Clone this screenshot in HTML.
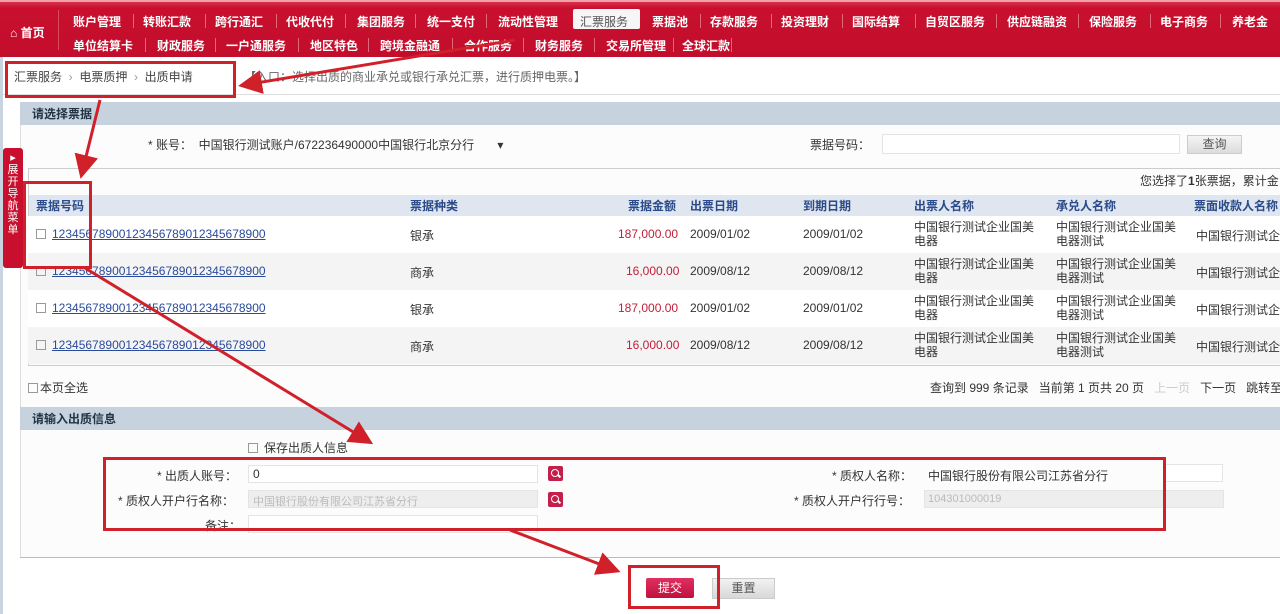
<!DOCTYPE html>
<html><head><meta charset="utf-8"><style>
*{margin:0;padding:0;box-sizing:border-box}
body{width:1280px;height:614px;overflow:hidden;background:#fff;font-family:"Liberation Sans","Noto Sans CJK SC",sans-serif;font-size:12px;color:#333;position:relative}
.abs{position:absolute}
#nav{left:0;top:0;width:1280px;height:57px;background:linear-gradient(#d8324a 0,#c8102e 6px,#c30d2c 100%);border-top:2px solid #f0a0a8}
.nv{position:absolute;color:#fff;font-weight:bold;font-size:12px;white-space:nowrap}
.sep{position:absolute;width:1px;height:14px;background:#e0687a}
.hd{position:absolute;left:20px;width:1260px;height:23px;background:#c6d3df;color:#234;font-weight:bold;padding:3px 12px;font-size:12px}
.th{position:absolute;top:197px;color:#2a4a8a;font-weight:bold}
.row{position:absolute;left:28px;width:1252px;height:37px}
.cell{position:absolute;font-size:12px;color:#333;white-space:nowrap}
.lnk{color:#2a4a9a;text-decoration:underline}
.red{color:#c0203a}
.box{position:absolute;border:3px solid #d0202a}
.inp{position:absolute;height:18px;background:#fff;border:1px solid #e4e4e4}
.srch{position:absolute;width:15px;height:15px;background:#c41e4a;border-radius:2px}
.srch:before{content:"";position:absolute;left:3px;top:3px;width:6px;height:6px;border:1.5px solid #fff;border-radius:50%}
.srch:after{content:"";position:absolute;left:9px;top:9px;width:4px;height:2px;background:#fff;transform:rotate(45deg)}
.cb{display:inline-block;width:10px;height:10px;border:1px solid #999;vertical-align:-1px;margin-right:6px}
</style></head><body>
<div id="nav" class="abs">
 <div class="nv" style="left:10px;top:22px">⌂ 首页</div>
 <div class="sep" style="left:58px;top:8px;height:40px;background:#d84a5e"></div>
 <div class="nv" style="left:73px;top:11px">账户管理</div><div class="sep" style="left:133px;top:12px"></div>
 <div class="nv" style="left:143px;top:11px">转账汇款</div><div class="sep" style="left:205px;top:12px"></div>
 <div class="nv" style="left:215px;top:11px">跨行通汇</div><div class="sep" style="left:276px;top:12px"></div>
 <div class="nv" style="left:286px;top:11px">代收代付</div><div class="sep" style="left:345px;top:12px"></div>
 <div class="nv" style="left:357px;top:11px">集团服务</div><div class="sep" style="left:415px;top:12px"></div>
 <div class="nv" style="left:427px;top:11px">统一支付</div><div class="sep" style="left:486px;top:12px"></div>
 <div class="nv" style="left:498px;top:11px">流动性管理</div>
 <div class="abs" style="left:573px;top:7px;width:67px;height:20px;background:#f6f6f6;border-radius:2px"></div>
 <div class="nv" style="left:580px;top:11px;color:#555;font-weight:normal">汇票服务</div>
 <div class="nv" style="left:652px;top:11px">票据池</div><div class="sep" style="left:700px;top:12px"></div>
 <div class="nv" style="left:710px;top:11px">存款服务</div><div class="sep" style="left:771px;top:12px"></div>
 <div class="nv" style="left:781px;top:11px">投资理财</div><div class="sep" style="left:842px;top:12px"></div>
 <div class="nv" style="left:852px;top:11px">国际结算</div><div class="sep" style="left:915px;top:12px"></div>
 <div class="nv" style="left:925px;top:11px">自贸区服务</div><div class="sep" style="left:996px;top:12px"></div>
 <div class="nv" style="left:1007px;top:11px">供应链融资</div><div class="sep" style="left:1078px;top:12px"></div>
 <div class="nv" style="left:1089px;top:11px">保险服务</div><div class="sep" style="left:1150px;top:12px"></div>
 <div class="nv" style="left:1160px;top:11px">电子商务</div><div class="sep" style="left:1220px;top:12px"></div>
 <div class="nv" style="left:1232px;top:11px">养老金</div>
 <div class="nv" style="left:73px;top:35px">单位结算卡</div><div class="sep" style="left:145px;top:36px"></div>
 <div class="nv" style="left:157px;top:35px">财政服务</div><div class="sep" style="left:215px;top:36px"></div>
 <div class="nv" style="left:226px;top:35px">一户通服务</div><div class="sep" style="left:298px;top:36px"></div>
 <div class="nv" style="left:310px;top:35px">地区特色</div><div class="sep" style="left:368px;top:36px"></div>
 <div class="nv" style="left:380px;top:35px">跨境金融通</div><div class="sep" style="left:452px;top:36px"></div>
 <div class="nv" style="left:464px;top:35px">合作服务</div><div class="sep" style="left:523px;top:36px"></div>
 <div class="nv" style="left:535px;top:35px">财务服务</div><div class="sep" style="left:594px;top:36px"></div>
 <div class="nv" style="left:606px;top:35px">交易所管理</div><div class="sep" style="left:673px;top:36px"></div>
 <div class="nv" style="left:682px;top:35px">全球汇款</div><div class="sep" style="left:731px;top:36px"></div>
</div>
<div class="abs" style="left:0;top:57px;width:3px;height:557px;background:#c8d4e0"></div>
<div class="abs" style="left:14px;top:68px;color:#444">汇票服务 &nbsp;<span style="color:#999">›</span>&nbsp; 电票质押 &nbsp;<span style="color:#999">›</span>&nbsp; 出质申请</div>
<div class="abs" style="left:244px;top:68px;color:#666">【入口：选择出质的商业承兑或银行承兑汇票，进行质押电票。】</div>
<div class="abs" style="left:3px;top:94px;width:1277px;height:1px;background:#ddd"></div>
<div class="box" style="left:5px;top:61px;width:231px;height:37px"></div>

<div class="hd" style="top:102px">请选择票据</div>
<div class="abs" style="left:20px;top:125px;width:1260px;height:432px;border-left:1px solid #ddd;background:#fcfcfd"></div>
<div class="abs" style="left:148px;top:136px">* 账号：&nbsp; 中国银行测试账户/672236490000中国银行北京分行 &nbsp; &nbsp; &nbsp; ▾</div>
<div class="abs" style="left:810px;top:136px">票据号码：</div>
<div class="inp" style="left:882px;top:134px;width:298px;height:20px"></div>
<div class="abs" style="left:1187px;top:135px;width:55px;height:19px;background:linear-gradient(#f4f4f4,#dcdcdc);border:1px solid #ccc;text-align:center;line-height:17px;color:#555">查询</div>
<div class="abs" style="left:28px;top:168px;width:1252px;height:1px;background:#ccc"></div>
<div class="abs" style="left:28px;top:168px;width:1px;height:198px;background:#ccc"></div>
<div class="abs" style="left:1140px;top:172px;white-space:nowrap">您选择了<b>1</b>张票据，累计金</div>
<div class="abs" style="left:29px;top:195px;width:1251px;height:21px;background:#dfe6ef"></div>
<div class="th" style="left:36px">票据号码</div>
<div class="th" style="left:410px">票据种类</div>
<div class="th" style="left:628px">票据金额</div>
<div class="th" style="left:690px">出票日期</div>
<div class="th" style="left:803px">到期日期</div>
<div class="th" style="left:914px">出票人名称</div>
<div class="th" style="left:1056px">承兑人名称</div>
<div class="th" style="left:1194px">票面收款人名称</div>

<div class="row" style="top:216px;background:#fff"></div>
<div class="row" style="top:253px;background:#f4f4f5"></div>
<div class="row" style="top:290px;background:#fff"></div>
<div class="row" style="top:327px;background:#f4f4f5"></div>
<div class="abs" style="left:28px;top:365px;width:1252px;height:1px;background:#ccc"></div>

<div class="cell" style="left:36px;top:227px"><span class="cb"></span><span class="lnk">12345678900123456789012345678900</span></div>
<div class="cell" style="left:410px;top:227px">银承</div>
<div class="cell red" style="left:618px;top:227px">187,000.00</div>
<div class="cell" style="left:690px;top:227px">2009/01/02</div>
<div class="cell" style="left:803px;top:227px">2009/01/02</div>
<div class="cell" style="left:914px;top:220px;line-height:14px">中国银行测试企业国美<br>电器</div>
<div class="cell" style="left:1056px;top:220px;line-height:14px">中国银行测试企业国美<br>电器测试</div>
<div class="cell" style="left:1196px;top:227px">中国银行测试企</div>

<div class="cell" style="left:36px;top:264px"><span class="cb"></span><span class="lnk">12345678900123456789012345678900</span></div>
<div class="cell" style="left:410px;top:264px">商承</div>
<div class="cell red" style="left:626px;top:264px">16,000.00</div>
<div class="cell" style="left:690px;top:264px">2009/08/12</div>
<div class="cell" style="left:803px;top:264px">2009/08/12</div>
<div class="cell" style="left:914px;top:257px;line-height:14px">中国银行测试企业国美<br>电器</div>
<div class="cell" style="left:1056px;top:257px;line-height:14px">中国银行测试企业国美<br>电器测试</div>
<div class="cell" style="left:1196px;top:264px">中国银行测试企</div>

<div class="cell" style="left:36px;top:301px"><span class="cb"></span><span class="lnk">12345678900123456789012345678900</span></div>
<div class="cell" style="left:410px;top:301px">银承</div>
<div class="cell red" style="left:618px;top:301px">187,000.00</div>
<div class="cell" style="left:690px;top:301px">2009/01/02</div>
<div class="cell" style="left:803px;top:301px">2009/01/02</div>
<div class="cell" style="left:914px;top:294px;line-height:14px">中国银行测试企业国美<br>电器</div>
<div class="cell" style="left:1056px;top:294px;line-height:14px">中国银行测试企业国美<br>电器测试</div>
<div class="cell" style="left:1196px;top:301px">中国银行测试企</div>

<div class="cell" style="left:36px;top:338px"><span class="cb"></span><span class="lnk">12345678900123456789012345678900</span></div>
<div class="cell" style="left:410px;top:338px">商承</div>
<div class="cell red" style="left:626px;top:338px">16,000.00</div>
<div class="cell" style="left:690px;top:338px">2009/08/12</div>
<div class="cell" style="left:803px;top:338px">2009/08/12</div>
<div class="cell" style="left:914px;top:331px;line-height:14px">中国银行测试企业国美<br>电器</div>
<div class="cell" style="left:1056px;top:331px;line-height:14px">中国银行测试企业国美<br>电器测试</div>
<div class="cell" style="left:1196px;top:338px">中国银行测试企</div>

<div class="abs" style="left:28px;top:379px"><span class="cb" style="margin-right:2px"></span>本页全选</div>
<div class="abs" style="left:930px;top:379px;white-space:nowrap">查询到 999 条记录 &nbsp; 当前第 1 页共 20 页 &nbsp; <span style="color:#ccc">上一页</span> &nbsp; 下一页 &nbsp; 跳转至</div>

<div class="hd" style="top:407px">请输入出质信息</div>
<div class="abs" style="left:248px;top:439px"><span class="cb"></span>保存出质人信息</div>
<div class="abs" style="left:157px;top:467px">* 出质人账号：</div>
<div class="inp" style="left:248px;top:465px;width:290px"></div>
<div class="abs" style="left:253px;top:467px">0</div>
<div class="srch" style="left:548px;top:466px"></div>
<div class="abs" style="left:118px;top:492px">* 质权人开户行名称：</div>
<div class="inp" style="left:248px;top:490px;width:290px;background:#eee"></div>
<div class="abs" style="left:253px;top:493px;color:#bbb;font-size:11px">中国银行股份有限公司江苏省分行</div>
<div class="srch" style="left:548px;top:492px"></div>
<div class="abs" style="left:205px;top:517px">备注：</div>
<div class="inp" style="left:248px;top:515px;width:290px"></div>
<div class="abs" style="left:832px;top:467px">* 质权人名称：</div>
<div class="abs" style="left:928px;top:467px">中国银行股份有限公司江苏省分行</div>
<div class="inp" style="left:1163px;top:464px;width:60px"></div>
<div class="abs" style="left:794px;top:492px">* 质权人开户行行号：</div>
<div class="inp" style="left:924px;top:490px;width:300px;background:#eee"></div>
<div class="abs" style="left:928px;top:493px;color:#bbb;font-size:11px">104301000019</div>
<div class="box" style="left:103px;top:457px;width:1063px;height:74px"></div>
<div class="abs" style="left:20px;top:557px;width:1260px;height:1px;background:#bbb"></div>

<div class="abs" style="left:646px;top:578px;width:48px;height:20px;background:linear-gradient(#e03060,#c0103e);color:#fff;text-align:center;line-height:20px;border-radius:2px">提交</div>
<div class="abs" style="left:712px;top:578px;width:63px;height:21px;background:linear-gradient(#f2f2f2,#d8d8d8);border:1px solid #ccc;color:#555;text-align:center;line-height:19px">重置</div>
<div class="box" style="left:628px;top:565px;width:92px;height:44px"></div>

<div class="abs" style="left:3px;top:148px;width:20px;height:120px;background:#c8102e;border-radius:3px;color:#fff;font-size:11px;text-align:center;padding-top:4px;line-height:12px">▸<br>展<br>开<br>导<br>航<br>菜<br>单</div>
<div class="box" style="left:23px;top:181px;width:69px;height:88px"></div>

<svg class="abs" style="left:0;top:0" width="1280" height="614">
<defs><marker id="a" markerWidth="8" markerHeight="8" refX="6" refY="4" orient="auto"><path d="M0,0 L8,4 L0,8 z" fill="#d0202a"/></marker></defs>
<g stroke="#d0202a" stroke-width="3" fill="none" marker-end="url(#a)">
<line x1="515" y1="40" x2="244" y2="85"/>
<line x1="100" y1="100" x2="82" y2="173"/>
<line x1="85" y1="268" x2="368" y2="441"/>
<line x1="510" y1="530" x2="615" y2="570"/>
</g></svg>
</body></html>
